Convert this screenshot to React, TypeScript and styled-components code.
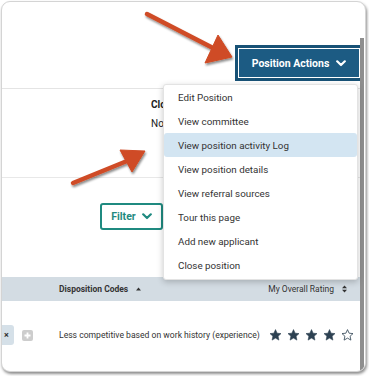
import React from 'react'
import styled, { createGlobalStyle } from 'styled-components'

const GlobalStyle = createGlobalStyle`
  html, body {
    margin: 0;
    padding: 0;
    background: #fff;
  }
  body {
    font-family: Roboto, "Liberation Sans", Arial, sans-serif;
    color: #333;
  }
`

const Page = styled.div`
  position: relative;
  width: 369px;
  height: 376px;
  overflow: hidden;
`

const Frame = styled.div`
  position: relative;
  margin: 1px 0 0 1px;
  width: 365px;
  height: 371px;
  box-sizing: border-box;
  border: 1px solid #d4d4d4;
  border-radius: 9px;
  box-shadow: 1px 2px 3px rgba(0, 0, 0, 0.45);
  background: #fff;
  overflow: hidden;
  display: flex;
`

const Main = styled.div`
  flex: 1;
  display: flex;
  flex-direction: column;
  min-width: 0;
`

const ScrollTrack = styled.div`
  width: 4px;
  margin: 36px 1px 0 0;
  background: #8e8e8e;
`

const TopBar = styled.div`
  height: 87px;
  box-sizing: border-box;
  border-bottom: 1px solid #e4e4e4;
  display: flex;
  justify-content: flex-end;
  align-items: flex-start;
  padding-top: 46px;
`

const ActionButton = styled.button`
  width: 122px;
  height: 30px;
  box-sizing: border-box;
  border: 1px solid #fff;
  background: #1c5b83;
  box-shadow: 0 0 0 3px #185276;
  color: #fff;
  font-family: Roboto, "Liberation Sans", Arial, sans-serif;
  font-weight: 700;
  font-size: 10.5px;
  display: flex;
  align-items: center;
  justify-content: center;
  gap: 7px;
  padding: 0;
`

const Info = styled.div`
  height: 89px;
  box-sizing: border-box;
  border-bottom: 1px solid #e8e8e8;
  padding: 10px 0 0 149px;
  display: flex;
  flex-direction: column;
  gap: 8px;
  font-size: 10px;
  color: #222;
`

// the dropdown covers the rest of these labels
const InfoLabel = styled.div<{ $bold?: boolean }>`
  width: 12px;
  overflow: hidden;
  font-weight: ${p => (p.$bold ? 700 : 400)};
  white-space: nowrap;
`

const FilterArea = styled.div`
  height: 99px;
  box-sizing: border-box;
  padding: 25px 0 0 98px;
`

const FilterButton = styled.button`
  width: 63px;
  height: 27px;
  box-sizing: border-box;
  border: 2px solid #1f8a80;
  border-radius: 3px;
  background: #fff;
  color: #1f8a80;
  font-family: Roboto, "Liberation Sans", Arial, sans-serif;
  font-weight: 700;
  font-size: 10.5px;
  display: flex;
  align-items: center;
  justify-content: center;
  gap: 6px;
  padding: 0;
`

const TableHead = styled.div`
  height: 24px;
  background: #d3dce3;
  display: flex;
  align-items: center;
  padding: 0 13px 0 57px;
  font-size: 8.5px;
  color: #333;
`

const HeadCell = styled.div<{ $bold?: boolean }>`
  display: flex;
  align-items: center;
  gap: 8px;
  font-weight: ${p => (p.$bold ? 700 : 400)};
  white-space: nowrap;
`

const Spacer = styled.div`
  flex: 1;
`

const Row = styled.div`
  height: 68px;
  display: flex;
  align-items: center;
  font-size: 8.6px;
  color: #333;
`

const Chip = styled.div`
  width: 12px;
  height: 20px;
  background: #d5e0e8;
  border-radius: 0 3px 3px 0;
  display: flex;
  align-items: center;
  justify-content: flex-start;
  padding-left: 2px;
  box-sizing: border-box;
  font-size: 9px;
  font-weight: 700;
  color: #333;
`

const PlusBox = styled.div`
  width: 11px;
  height: 11px;
  margin-left: 8px;
  border-radius: 2px;
  background: #cdcdcd;
  display: flex;
  align-items: center;
  justify-content: center;
`

const RowText = styled.div`
  margin-left: 26px;
  white-space: nowrap;
`

const Stars = styled.div`
  margin-left: 9px;
  display: flex;
  gap: 5px;
`

const Menu = styled.div`
  position: absolute;
  left: 161px;
  top: 82px;
  width: 195px;
  box-sizing: border-box;
  padding: 0 0 2px;
  background: #fff;
  border: 1px solid #e3e3e3;
  border-radius: 3px;
  box-shadow: 0 2px 6px rgba(0, 0, 0, 0.22);
`

const MenuItem = styled.div<{ $active?: boolean }>`
  height: 24px;
  display: flex;
  align-items: center;
  padding-left: 14px;
  font-size: 9.8px;
  color: #333;
  border-radius: 3px;
  background: ${p => (p.$active ? '#d3e5f2' : 'transparent')};
`

const Arrows = styled.svg`
  position: absolute;
  left: 0;
  top: 0;
  pointer-events: none;
`

const Chevron = ({ color }: { color: string }) => (
  <svg width="10" height="7" viewBox="0 0 10 7">
    <path d="M1.2 1.3 L5 5 L8.8 1.3" fill="none" stroke={color} strokeWidth="2.2" strokeLinecap="round" strokeLinejoin="round" />
  </svg>
)

const STAR = 'M6 0.6 L7.6 4.2 L11.5 4.6 L8.6 7.2 L9.4 11.1 L6 9.1 L2.6 11.1 L3.4 7.2 L0.5 4.6 L4.4 4.2 Z'

const Star = ({ filled }: { filled: boolean }) => (
  <svg width="13" height="12" viewBox="0 0 12 12">
    <path
      d={STAR}
      fill={filled ? '#2d4152' : 'none'}
      stroke="#2d4152"
      strokeWidth={filled ? 0.6 : 0.8}
      strokeLinejoin="round"
    />
  </svg>
)

const menuItems = [
  'Edit Position',
  'View committee',
  'View position activity Log',
  'View position details',
  'View referral sources',
  'Tour this page',
  'Add new applicant',
  'Close position',
]

const App = () => {
  return (
    <Page>
      <GlobalStyle />
      <Frame>
        <Main>
          <TopBar>
            <ActionButton>
              Position Actions
              <Chevron color="#fff" />
            </ActionButton>
          </TopBar>
          <Info>
            <InfoLabel $bold>Closing Date</InfoLabel>
            <InfoLabel>No closing date</InfoLabel>
          </Info>
          <FilterArea>
            <FilterButton>
              Filter
              <Chevron color="#1f8a80" />
            </FilterButton>
          </FilterArea>
          <TableHead>
            <HeadCell $bold>
              Disposition Codes
              <svg width="5" height="4" viewBox="0 0 5 4">
                <path d="M0 3.5 L2.5 0.5 L5 3.5 Z" fill="#333" />
              </svg>
            </HeadCell>
            <Spacer />
            <HeadCell>
              My Overall Rating
              <svg width="5" height="8" viewBox="0 0 5 8">
                <path d="M0 3.3 L2.5 0.5 L5 3.3 Z M0 4.7 L2.5 7.5 L5 4.7 Z" fill="#333" />
              </svg>
            </HeadCell>
          </TableHead>
          <Row>
            <Chip>×</Chip>
            <PlusBox>
              <svg width="7" height="7" viewBox="0 0 7 7">
                <path d="M3.5 0.5 V6.5 M0.5 3.5 H6.5" stroke="#fff" strokeWidth="1.8" />
              </svg>
            </PlusBox>
            <RowText>Less competitive based on work history (experience)</RowText>
            <Stars>
              {[true, true, true, true, false].map((f, i) => (
                <Star key={i} filled={f} />
              ))}
            </Stars>
          </Row>
        </Main>
        <ScrollTrack />
        <Menu>
          {menuItems.map((item, i) => (
            <MenuItem key={item} $active={i === 2}>
              {item}
            </MenuItem>
          ))}
        </Menu>
      </Frame>
      <Arrows width="369" height="376" viewBox="0 0 369 376">
        <defs>
          <filter id="arrowShadow" x="-20%" y="-20%" width="140%" height="160%">
            <feDropShadow dx="1" dy="2" stdDeviation="1.3" floodColor="#000" floodOpacity="0.45" />
          </filter>
        </defs>
        <g filter="url(#arrowShadow)" fill="#cf4b25" stroke="#cf4b25">
          <line x1="147" y1="14" x2="213" y2="48" strokeWidth="4.5" strokeLinecap="round" />
          <polygon points="232,57 205,63 218,35" strokeWidth="1" strokeLinejoin="round" />
          <line x1="73" y1="183" x2="127" y2="161" strokeWidth="4.5" strokeLinecap="round" />
          <polygon points="145,151 120,150 132,172" strokeWidth="1" strokeLinejoin="round" />
        </g>
      </Arrows>
    </Page>
  )
}

export default App
